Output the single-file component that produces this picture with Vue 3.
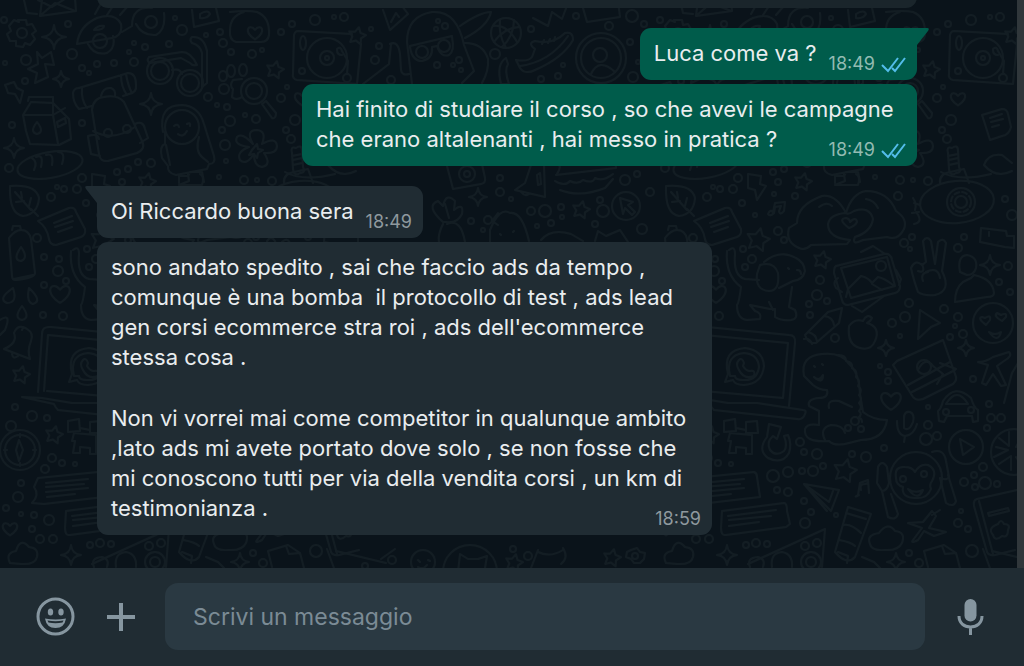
<script setup>
import { ref } from 'vue'

const draft = ref('')

const messages = [
  {
    id: 1,
    out: true,
    tail: true,
    time: '18:49',
    paragraphs: ['Luca come va ?'],
  },
  {
    id: 2,
    out: true,
    time: '18:49',
    paragraphs: ['Hai finito di studiare il corso , so che avevi le campagne che erano altalenanti , hai messo in pratica ?'],
  },
  {
    id: 3,
    out: false,
    tail: true,
    time: '18:49',
    paragraphs: ['Oi Riccardo buona sera'],
  },
  {
    id: 4,
    out: false,
    time: '18:59',
    paragraphs: [
      "sono andato spedito , sai che faccio ads da tempo , comunque è una bomba  il protocollo di test , ads lead gen corsi ecommerce stra roi , ads dell'ecommerce stessa cosa .",
      'Non vi vorrei mai come competitor in qualunque ambito ,lato ads mi avete portato dove solo , se non fosse che mi conoscono tutti per via della vendita corsi , un km di testimonianza .',
    ],
  },
]

const stars = [
  [275, 70, 9], [147, 182, 9], [357, 36, 9], [102, 240, 12], [166, 260, 9], [21, 375, 9],
  [54, 435, 9], [189, 471, 12], [581, 210, 9], [514, 563, 9], [612, 558, 9],
]
const sparkles = [
  [54, 37, 12], [61, 79, 8], [14, 148, 10], [151, 104, 11], [478, 197, 9], [230, 348, 8],
  [310, 348, 8], [71, 555, 10], [334, 265, 10], [240, 562, 9],
]
const hearts = [[60, 294, 11], [235, 401, 11], [10, 529, 8], [302, 99, 8], [255, 33, 8]]
const dots = [
  [4, 20, 3], [68, 24, 3], [26, 60, 5], [5, 63, 2], [72, 54, 5], [25, 81, 3], [82, 68, 3], [89, 73, 2],
  [97, 64, 3], [114, 63, 3], [134, 62, 4], [129, 52, 2], [134, 43, 2], [145, 47, 3], [169, 44, 3],
  [175, 18, 2], [182, 30, 5], [206, 35, 2], [220, 32, 3], [223, 43, 4], [231, 52, 3], [252, 54, 4],
  [262, 50, 2], [281, 32, 3], [292, 24, 3], [287, 87, 2], [281, 98, 4], [208, 97, 4], [217, 105, 2],
  [227, 107, 3], [230, 121, 5], [245, 115, 2], [256, 119, 4], [222, 130, 3], [225, 145, 5], [226, 161, 2],
  [286, 130, 3], [295, 120, 5], [291, 139, 4], [244, 180, 4], [257, 180, 2], [272, 181, 4], [12, 125, 3],
  [9, 168, 4], [82, 178, 4], [82, 123, 3], [117, 172, 3], [128, 169, 3], [138, 162, 3], [151, 163, 4],
  [122, 182, 3], [315, 20, 5], [334, 17, 2], [344, 17, 4], [371, 29, 2], [379, 46, 3], [375, 60, 4],
  [391, 80, 4], [437, 65, 3], [438, 21, 2], [445, 26, 3], [436, 29, 2], [459, 60, 3], [453, 65, 2],
  [461, 70, 2], [495, 54, 5], [531, 29, 3], [576, 16, 3], [609, 26, 4], [632, 16, 6], [630, 42, 3],
  [563, 65, 2], [558, 76, 3], [541, 79, 3], [633, 77, 5], [644, 24, 3], [638, 62, 2],
  [51, 197, 4], [64, 189, 3], [57, 187, 2], [77, 189, 4], [86, 203, 3],
  [118, 194, 2], [139, 196, 3], [99, 215, 2], [122, 231, 4], [128, 240, 3], [87, 249, 3],
  [242, 196, 4], [219, 177, 2], [349, 199, 3], [356, 215, 5],
  [308, 237, 3], [302, 248, 4], [256, 237, 3], [248, 243, 4], [254, 249, 2], [352, 266, 4], [343, 282, 3],
  [354, 292, 3], [288, 309, 4], [302, 317, 4], [253, 303, 4], [249, 317, 5], [236, 323, 4], [244, 336, 2],
  [307, 334, 4], [294, 337, 3], [299, 326, 2], [153, 304, 3], [154, 315, 3], [171, 301, 3], [161, 295, 5],
  [164, 280, 4], [179, 338, 4], [96, 259, 4], [89, 267, 3], [59, 259, 3], [58, 271, 5], [66, 281, 3],
  [44, 257, 3], [44, 285, 3], [43, 315, 3], [63, 316, 4], [37, 238, 4], [224, 366, 2],
  [232, 372, 3], [232, 381, 3], [317, 379, 3], [272, 407, 2], [333, 404, 3], [335, 418, 4], [345, 418, 4],
  [331, 428, 3], [272, 425, 4], [281, 436, 4], [270, 439, 6], [199, 421, 4], [192, 428, 3], [205, 429, 3],
  [144, 442, 4], [148, 452, 3], [161, 454, 5], [196, 454, 3], [210, 457, 5], [228, 448, 3], [167, 466, 3],
  [157, 471, 5], [146, 471, 3], [132, 472, 5], [117, 476, 6], [121, 490, 3], [132, 492, 4], [148, 501, 3],
  [155, 512, 3], [149, 523, 5], [180, 515, 2], [308, 482, 4], [318, 475, 3], [327, 467, 4], [319, 487, 3],
  [329, 483, 6], [341, 484, 3], [305, 511, 2], [302, 523, 4], [312, 529, 3], [316, 551, 6], [253, 553, 3],
  [263, 563, 4], [53, 539, 4], [40, 539, 4], [90, 545, 3], [100, 543, 4], [111, 544, 3], [149, 546, 4],
  [161, 543, 4], [15, 407, 3], [32, 416, 5], [47, 418, 3], [52, 458, 4], [62, 463, 3], [45, 469, 4],
  [75, 464, 2], [21, 483, 3], [18, 497, 5], [6, 508, 3], [21, 514, 2], [34, 515, 3], [49, 520, 5],
  [32, 529, 3], [500, 178, 3], [500, 192, 4], [511, 199, 2], [531, 211, 4], [545, 211, 6], [561, 207, 3],
  [551, 223, 3], [562, 217, 2], [488, 220, 4], [471, 221, 3], [483, 230, 2], [537, 226, 2], [600, 200, 3],
  [603, 211, 6], [595, 224, 3], [625, 180, 5], [637, 174, 3], [650, 192, 4],
  [642, 229, 5], [392, 560, 4], [365, 566, 3], [513, 549, 3], [528, 556, 4],
]

function starPath([x, y, s]) {
  const pts = []
  for (let i = 0; i < 10; i++) {
    const a = -1.35 + (i * Math.PI) / 5
    const r = i % 2 ? s * 0.52 : s
    pts.push(`${(x + r * Math.cos(a)).toFixed(1)} ${(y + r * Math.sin(a)).toFixed(1)}`)
  }
  return `M${pts.join('L')}Z`
}
function sparklePath([x, y, s]) {
  return `M${x} ${y - s}Q${x + 1} ${y - 1} ${x + s} ${y}Q${x + 1} ${y + 1} ${x} ${y + s}Q${x - 1} ${y + 1} ${x - s} ${y}Q${x - 1} ${y - 1} ${x} ${y - s}Z`
}
function heartPath([x, y, s]) {
  return `M${x} ${y + s * 0.8}C${x - s * 1.6} ${y - s * 0.2} ${x - s * 0.7} ${y - s * 1.3} ${x} ${y - s * 0.4}C${x + s * 0.7} ${y - s * 1.3} ${x + s * 1.6} ${y - s * 0.2} ${x} ${y + s * 0.8}Z`
}
</script>

<template>
  <main class="app">
    <section class="chat" aria-label="Conversazione">
      <svg class="wallpaper" aria-hidden="true">
        <defs>
          <pattern id="doodles" width="656" height="600" patternUnits="userSpaceOnUse">
            <g class="ink">
              <circle v-for="(d, i) in dots" :key="'d' + i" :cx="d[0]" :cy="d[1]" :r="d[2]" />
              <path v-for="(s, i) in stars" :key="'s' + i" :d="starPath(s)" />
              <path v-for="(s, i) in sparkles" :key="'p' + i" :d="sparklePath(s)" />
              <path v-for="(s, i) in hearts" :key="'h' + i" :d="heartPath(s)" />
              <!-- envelope, gear, plant, bolt -->
              <path d="M24 0l3 13 10 1M42 0l-2 16 36-5-1-13M41 15l14-12 20 8M38 0l14 7 16-10" />
              <circle cx="22" cy="33" r="5" />
              <path d="M18 20l8 0 1 5 5-1 4 7-4 3 3 5-5 6-5-2-2 4-7-1 0-5-6 0-3-7 4-3-2-5 5-6 5 2z" />
              <path d="M37 52l5 6 9-6 3 13-9-1 3 13-13 6 2-10-9-4 10-5z" />
              <path d="M5 85l9-3 3 6 6 3-3 12-5-9-7-1-2-6z" />
              <!-- milk carton and bread -->
              <path d="M23 115l8-13 22 1 16 16 2 20-12 6-29-1-4-13zM23 115l30 0 5 29M53 103l0 12 12-7M28 101l1-4 24 0 0 5M57 122l8-4 1 5-8 4z" />
              <path d="M37 122q-8 10 0 12 8-2 0-12z" />
              <ellipse cx="50" cy="165" rx="33" ry="13" transform="rotate(-10 50 165)" />
              <path d="M32 158q6 4 2 12M36 157q8-4 5 10M46 155q8-3 6 10M58 152q8 0 4 12" />
              <!-- beetle car -->
              <path d="M77 44q2-18 20-26 18-6 24 6 2 12-9 14zM88 44q6 12 19 9 9-5 6-17M94 30q4-5 10-4 0 4-10 4zM95 14l8-14M107 15l10-15M122 32l10-6M132 26q0-20 20-18M136 24q6 12 20 11 10-5 8-22M120 15l13-15" />
              <circle cx="100" cy="41" r="7" /><circle cx="151" cy="22" r="6" />
              <!-- bedroll and backpack -->
              <path d="M79 88l49-15q8 0 8 12 1 8-7 9l-6 2M92 106l-13 3q-6-6-6-16 1-5 6-5M82 88q-1 12 5 20M121 75q0 12 6 20M126 74q2 12 6 19M101 96q2-9 10-8 5 2 4 8" />
              <path d="M92 110q1-12 12-13 13-3 20 5l18 39q4 8-5 12l-29 8q-8 1-9-7zM93 131q20 11 42-4M88 136q10-3 11 3M88 137l3 17 9 2M135 124q8-4 10 5l3 9-8 5" />
              <circle cx="108" cy="133" r="4" /><circle cx="127" cy="129" r="4" />
              <!-- scooter -->
              <circle cx="160" cy="71" r="13" /><circle cx="160" cy="71" r="9" />
              <circle cx="190" cy="83" r="13" /><circle cx="190" cy="83" r="9" />
              <path d="M149 57l33-5q9 0 15 13-5 1-7-2l-9-5-31 5q-4-2-1-6M172 70q8-2 10 4M192 37q12-1 15 14l0 32-5 4 0-34q-2-8-10-10-3-3 0-6" />
              <!-- astronaut -->
              <circle cx="182" cy="127" r="17" />
              <path d="M163 132q-5-27 19-27 17 1 22 19l10 32q2 8-5 8l-2 5-31 6q-9-2-8-9l-6-8q-3-12 3-14l0-12M199 137q-4 14 3 20l6 5M166 145l4 20M174 126q4-3 5 1M187 124q4-2 3 2M178 134q5 4 9-3M179 183l0-7 9 0 2-4 12 0 2 10" />
              <path d="M230 12q18-2 27 0 13 5 12 23-1 7-8 7l-25 0q-7-2-6-12 0-14 14-18" />
              <path d="M192 10l2 17 25-6-3-13M200 14q8-5 10 0-3 5-10 4z" />
              <!-- paw and magnifier -->
              <ellipse cx="231" cy="71" rx="4" ry="6" /><ellipse cx="243" cy="70" rx="4" ry="6" /><ellipse cx="223" cy="76" rx="4" ry="5" /><ellipse cx="224" cy="89" rx="5" ry="5" />
              <path d="M242 79l-9 1q-4 6 0 9l-1 8q4 4 10 0" />
              <circle cx="254" cy="91" r="13" /><circle cx="254" cy="91" r="8" />
              <path d="M262 104l10 14q4 1 4-5l-10-12z" />
              <!-- flower -->
              <path d="M253 144q-8-14 4-14 10 1 5 14 14-8 15 2 0 8-13 7 8 12-2 14-8-1-8-13-8 12-14 6-4-8 9-13-16-2-12-10 5-5 16 7z" />
              <path d="M257 144l1 5 5 1-5 3-1 5-3-4-5 1 3-5z" />
              <!-- turntable -->
              <path d="M298 31l54 3M361 44l-4 40-60-4q-5-1-4-7l1-38q1-4 4-4" />
              <circle cx="327" cy="58" r="20" /><circle cx="327" cy="58" r="7" /><circle cx="327" cy="58" r="2" />
              <circle cx="302" cy="71" r="3" /><circle cx="347" cy="78" r="4" />
              <ellipse cx="303" cy="43" rx="3" ry="7" />
              <path d="M337 49q4-3 5 2l6 10-1 13M337 50q0 5 5 5" />
              <path d="M383 10l7 20 18-16-6-8M391 22l5-9 3 4" />
              <!-- diver -->
              <path d="M412 84l-5-42q0-26 25-30 25-2 32 33l10 26-12 12M410 46l42-10M410 47q2 14 12 14 11-2 10-14l5-1q4 12 12 9 6-4 3-18M460 26q20-14 31-14-3 14-26 26M465 43q18 0 23 16 1 12-6 24M390 44q8-4 10 10l1 16q1 6 8 4M391 44l-2 20-26 20" />
              <circle cx="422" cy="52" r="6" /><circle cx="444" cy="46" r="6" />
              <circle cx="506" cy="33" r="15" />
              <path d="M493 26q14-2 24 16M494 42q10-14 25-15M500 20q-2 14 6 28M514 20q0 16-12 27M506 58q-10 6-5 26l8 0q-5-14-1-20z" />
              <path d="M516 60q12 2 16-3l3-8q-8-6 0-8 18 4 30-8 8-2 8 7-10 18-38 30-10 5-15-2zM520 66q30-4 48-30M542 44l2-4M548 43l2-4M554 41l1-4M533 18l15 8 4-14 10 7 6-16M583 8l4 14 33-5-2-16" />
              <circle cx="601" cy="58" r="25" /><circle cx="601" cy="58" r="20" /><circle cx="600" cy="55" r="7" />
              <path d="M591 74q8-17 24-2" />
              <!-- sticker, bone, fish -->
              <path d="M326 115l20-6q5 0 6 5l3 13q-2 8-9 9l-12 4-6-19zM334 118l12-4M335 122l12-3M336 127l7-2" />
              <path d="M292 153q-2-7 4-5 6-4 6 3l1 16q3 6-3 6-6 4-7-4zM292 156l10-2M293 160l9-2M293 165l9-2" />
              <path d="M285 172q18 10 50 2M328 165q4-12 18-10l10 8M328 165q12 14 28 6" />
              <!-- leaf, message, bottle -->
              <path d="M10 186q26-2 29 12-1 16-16 18-14-2-13-30zM15 192l16 18M22 198l-1-6M24 201l-8 1M29 206l2-8M31 209l7 7" />
              <path d="M38 221l31-13q6-1 7 4l9 17q1 6-4 8l-25 8q-6 0-7-6-2-12-11-18zM54 223l18-7M55 227l18-6M58 232l14-5" />
              <path d="M9 238q6-8 12-8 8 0 10 9l4 34q0 5-19 7-4 0-4-4zM12 230l1-4 7 0 1 4M14 279l19-4M21 247q-9 13 0 14 8-3 0-14z" />
              <path d="M13 288q-16 11-6 15 11 0 6-15zM29 288q-3 14 4 16 10-3-4-16zM22 306q-9 12 0 14 9-2 0-14z" />
              <!-- bell -->
              <path d="M4 349q14-6 10-16 4-10 13-4 7 4 4 12-4 10-1 18zM12 354q1 6 6 2M22 330q1-4 5-1" />
              <path d="M0 320q12-8 5 10l-5 5" />
              <!-- laptop -->
              <path d="M38 392l4-58q0-8 9-7l82 8q7 0 6 8l-6 63M44 391l4-56 84 8-5 55-80-7M22 397l20 1 30 5 29 0 46 7q4 0 2 4-2 6-8 5l-83-9q-3-3-4-6z" />
              <path d="M69 382l3-8q-6-24 17-26 18 2 19 18-2 18-20 19-9 0-11-5z" />
              <path d="M74 376q-5-21 14-23 14 1 15 14-2 14-16 13-8 0-8-4zM83 360q3-3 5 3l-1 3q3 5 7 5 6-1 4 5-10 4-15-6-4-6 0-10z" />
              <path d="M68 421l11-2 1 12-12 1zM90 422l11-1 1 12-12 0zM80 428l10 2M74 433l-2 8 3 0-2 12 7 0 0-6 10 1 0 6 6 0 0-19z" />
              <!-- compass -->
              <circle cx="20" cy="450" r="20" /><circle cx="20" cy="450" r="15" /><circle cx="11" cy="426" r="5" />
              <path d="M19 440l4 10-4 11-3-11zM20 437l0-3M20 466l0-3M7 450l-3 0M36 450l-3 0" />
              <!-- books -->
              <path d="M38 478l60-6q3 1 3 5l3 20-60 7-12-1q8-8 2-16zM46 483l42-4M46 487l38-3M46 492l42-4M47 497l28-3" />
              <path d="M66 511l62-8q3 0 3 8l3 13-4 3-60 8q-5 1-5-7zM72 516l48-6M73 520l42-4M73 526l30-4" />
              <path d="M10 563q-5-10 6-12 4-14 13-4 10 1 8 10-2 8-16 7z" />
              <!-- lightning, note -->
              <path d="M92 174l13 2-1 8 6 2-9 14-2-10-7-2zM112 214q2-5 5-2l2-9 10-1-1 9q-4 5-5 0l2-5-6 1-1 6q-4 4-6 1z" />
              <!-- heart hands -->
              <path d="M143 248q-14-6-10-20l8-5q0-18 25-27 14-2 24 17-16 1-18 11 0 14 22 16l-3 4-36 1q-6 6-12 3M190 213q6-20 20-22 22 0 30 20 12 8 8 18-6 12-17 8l-24 3q-12 6-8-3 16-5 18-18-3-13-19-8q-6 4-8 2M163 207q8-6 13-1M210 199q8 1 12 9" />
              <path d="M193 228q-12-9-3-10 4 1 4 4 6-6 7 0-2 4-8 6z" />
              <!-- planet -->
              <ellipse cx="301" cy="202" rx="37" ry="21" transform="rotate(-5 301 202)" />
              <circle cx="305" cy="202" r="14" /><circle cx="305" cy="202" r="10" stroke-dasharray="5 3" /><circle cx="305" cy="202" r="6" />
              <path d="M264 205l-6-2M263 212l-7 1M284 183q-1-9 10-11l14-3 5 14M257 198q4 6 2 12M260 212q8 10-2 12M179 185l10-4-1-7M180 185l22 0q3-8-2-11" />
              <path d="M325 228l25 3 1 5 7 0 0 12-9-1-25-5zM333 232l0 4" />
              <!-- dog -->
              <path d="M73 250q6-5 6 4-2 22 10 25l14 1M71 251q-2 24 14 36-2 16-4 18 0 14 10 15l13-1q2-6-5-8l-5-6 20 4 5 0 0 8q6 4 16 3 8-1 4-10l-6-3 3-20M108 262q16-13 32-4 8 4 9 13-2 9-12 10l-14 7M104 265q14-4 18 8 2 18-9 18-14-1-12-17zM132 268l1 1M141 270q4 0 4 4M113 302l4 8" />
              <!-- photo -->
              <path d="M180 266l48-12q7-1 8 6l8 26q0 6-5 7l-47 12q-5 0-6-5l-8-27q0-6 2-7zM185 268l46-11 8 29-44 12zM190 297l2-8 13-13q8 2 11 7l6-6q6 1 15 8M216 284l10 6M205 252l12-6 12 8M196 306l10 6 22-16M182 278q-6 4-2 10l6 4M240 270l5 9-2 6" />
              <circle cx="225" cy="266" r="5" />
              <!-- hand, person -->
              <path d="M262 292q-5-14-7-24 4-9 11-3l4-3-3-21q4-6 8 0l4 23 3-22q5-5 8 1l-4 28q10 20-7 24-12 1-17-3zM266 264q4 10-4 7M270 272q12-6 14 6M267 281q-3-8 5-9" />
              <path d="M304 272q-3-16 7-17 11 2 9 13-2 7-9 7zM299 302q0-14 8-20l8-4 3-3q19 4 20 18 0 4-7 4z" />
              <circle cx="337" cy="323" r="20" />
              <path d="M330 325q-9-7-4-8l3 1q6-4 5 2zM346 321q-9-5-5-8l4 2q6-3 5 2zM333 332q6 4 12 0-3 12-12 0z" />
              <path d="M264 310l20 13-9 4-13 12zM149 335l23-23 14-4-3 15-23 20q-8 1-11-8zM152 332q8 2 9 9M168 316q9 1 10 9M148 339q6-1 8 5" />
              <path d="M193 326q6-8 14-5 4-8 9-3-2 4-5 5 14 4 8 18-4 10-15 7-13-3-11-22z" />
              <!-- dinosaur -->
              <path d="M148 376q-4-20 18-22 20-2 27 10 10 8 11 30l3 18q10 8 24 8-3 20-26 20l-12 3q-14 4-20-2-26 2-24-12 2-6 14-4l0-14-10-5q-2-7 10-8 10 0 8-8-8 0-14-5zM173 408q-2-9 10-7l13 6M169 440q-6-12 6-15 12 0 14 8M206 422q0-4-4-4 5-4 1-7 4-4 0-8 4-4 0-8 4-5-1-9 3-5-2-9 2-6-4-9 1-6-6-7 0-6-8-6M158 366l1 1M166 364l1 1M158 377q5 5 9-2 0 10-9 2z" />
              <!-- gift box, airplane -->
              <path d="M237 365l20 32q3 4 10 2l30-15q5-4 2-10l-12-34-46 21zM252 385l42-23M256 392l43-22M262 370q7-14 15-4l10 8-6 10M284 363l16 6" />
              <circle cx="268" cy="367" r="7" />
              <path d="M322 362q8 0 15-5l16-5q4 4-5 9l-7 5 9 19-5 1-8-12-7 11-4-2 6-18z" />
              <path d="M348 403l8-30 6-10" />
              <!-- microphone, small car -->
              <path d="M248 418q0-7 6-6 5 2 3 10-4 10-9 6zM241 421q0 14 8 15 9-1 12-12M249 436l-1 6M283 421l-1-10q3-2 5-10 12-18 28-3 3 10 7 12l0 11-5 1-1-6-25 0-3 6zM290 404q11-18 22 0z" />
              <circle cx="290" cy="412" r="3" /><circle cx="315" cy="410" r="3" />
              <circle cx="310" cy="447" r="17" />
              <path d="M304 439l14 8-11 8zM111 437q-10 13 1 21 14 7 21-5 3-9-1-18l-4 1q4 10 0 15-8 6-14-1-4-8 3-14l4 3 4-12-12-3z" />
              <!-- orange slice -->
              <circle cx="358" cy="452" r="23" /><path d="M340 447l12 3-14 7M343 438l10 8 0-14M343 464l12-8 0 14M360 447l8-14M360 457l8 12" />
              <!-- monkey -->
              <circle cx="260" cy="478" r="26" />
              <path d="M240 478q-2-12 9-11 7 0 10 5 5-9 13-7 10 5 4 16-3 4-1 8-4 10-15 9-15 0-13-11-7-2-7-9zM252 489q7 5 15 1-5 12-15-1z" />
              <circle cx="247" cy="479" r="3" /><circle cx="268" cy="474" r="3" />
              <path d="M222 467q4-8 9 0l2 16q-2 8-7 8l-5-8zM226 491l6 26q8 4 10-3l-7-20M276 452q12-4 14 9l3 16q-3 4-8 1M284 478l6 25q8 5 10-2l-8-26" />
              <path d="M205 490q-2-6 4-6l3-1M203 495q-6 3-1 0l2-12 8-3 1 13M148 484l35 6-8 21zM148 484l25 18 4-11M148 484l17 20 6 7" />
              <path d="M192 507l23 7-16 43q-8 9-20-5zM190 513l20 6M187 525q8-2 18 8M183 540q12 2 16 6M182 552l10 4-1 7" />
              <path d="M214 544q-4-9 9-11 9-12 16-2 11 1 7 12-4 8-17 7-14 1-15-6zM252 523l15-1 9-11 4 5-7 12 17 4-12 4-10-5-6 9q-8 4-5 0l9-12zM276 515l8-5" />
              <!-- notebook -->
              <path d="M361 490l-40 9q-4 1-3 7l13 46q2 4 8 3l20-5M323 501l14 53M332 513l20-5 1 3-20 5z" />
              <path d="M342 524q3-6 6 0 7 0 4 6 0 8-6 6-7 6-9-1-6-7 5-11z" />
              <path d="M92 564l77-35-3 38M94 567q-4-9 8-10 8 2 5 10M116 567q-2-14 10-15 11 2 10 15" />
              <circle cx="155" cy="562" r="10" /><circle cx="155" cy="562" r="5" />
              <path d="M206 557l12 5 6 6M272 567l-4-16 20-6 12 8 4 15M286 546l3 8 11-1M327 549l8 22M336 551l50 12M395 549l-14 10" />
              <circle cx="423" cy="562" r="12" /><path d="M418 560l2 2M428 560l2 1M418 567q5 3 9-2" />
              <circle cx="470" cy="572" r="27" />
              <path d="M458 572l2-18 8 5 10 0 9-3-3 18M538 550l-7 18M538 552q12 6 25-2M563 548q6 10-2 16" />
              <path d="M631 550l6-2 3 4 5 1-1 6-4 4-6 0-3-4-5-2 1-5z" /><circle cx="635" cy="556" r="3" />
              <!-- camera, bell, burger, cat, cursor -->
              <path d="M447 166l6 23 28-5q5-1 4-6l-3-14M515 190l10-7 6-18q6-8 13 0l1 32zM521 192q4 5 8 2M537 175l1 10 3-1-1-11zM557 174q5-8 1-10M556 175l60-7q0-6-6-9M555 181q10 6 15 0 8 4 13-1 10 4 12-2 8 4 18-4M560 190q20 8 45-2l8-9" />
              <circle cx="467" cy="174" r="8" /><circle cx="467" cy="174" r="3" />
              <path d="M443 222q-18-16-5-21l5 5q3-14 12-5l-1 9q10-8 8 4-5 10-16 8zM449 218l-4-14M443 224q-8 16-1 24M447 224q14-6 18 18M490 242l0-12q10-24 20-17 12-2 19 28M498 225l-6-4 6-8M501 235l-1-1M513 232l1-1M541 240q10-12 30-6l12 7M595 241l3-10 8 5 14-6 8 12" />
              <circle cx="626" cy="206" r="14" /><path d="M620 198l13 4-5 3 7 7-3 3-7-7-2 6z" />
            </g>
          </pattern>
        </defs>
        <rect width="100%" height="100%" fill="url(#doodles)" />
      </svg>

      <div class="thread">
        <div class="previous"></div>
        <article
          v-for="m in messages"
          :key="m.id"
          class="bubble"
          :class="{ out: m.out, first: m.tail }"
        >
          <svg v-if="m.tail" class="tail" viewBox="0 0 12 17" aria-hidden="true">
            <path d="M0 0H10Q13 0 11 3L0 17Z" />
          </svg>
          <p v-for="(p, i) in m.paragraphs" :key="i">{{ p }}<span v-if="i === m.paragraphs.length - 1" class="meta"><time>{{ m.time }}</time><svg v-if="m.out" class="ticks" viewBox="0 0 25 17" role="img" aria-label="Letto">
              <path d="M1 9L7 15L17 2" />
              <path d="M11 12L14 15L24 2" />
            </svg></span></p>
        </article>
      </div>
      <div class="scrollbar"></div>
    </section>

    <form class="composer" @submit.prevent="draft = ''">
      <button type="button" class="emoji" aria-label="Emoji">
        <svg viewBox="0 0 39 39" aria-hidden="true">
          <circle cx="19.500" cy="19.500" r="17.500" fill="none" stroke="currentColor" stroke-width="3" />
          <ellipse cx="14.500" cy="15" rx="2.700" ry="3.500" fill="currentColor" />
          <ellipse cx="25" cy="15" rx="2.700" ry="3.500" fill="currentColor" />
          <path d="M9 21.500Q19.500 23.500 30 21.500Q28.500 31 19.500 31Q10.500 31 9 21.500Z" fill="currentColor" />
          <path d="M11.500 23.500Q19.500 25 27.500 23.500L26.500 25.500Q19.500 27 12.500 25.500Z" class="mouth" />
        </svg>
      </button>
      <button type="button" class="plus" aria-label="Allega">
        <svg viewBox="0 0 28 28" aria-hidden="true">
          <path d="M14 0V28M0 14H28" fill="none" stroke="currentColor" stroke-width="4" />
        </svg>
      </button>
      <input v-model="draft" type="text" placeholder="Scrivi un messaggio" aria-label="Scrivi un messaggio" />
      <button type="button" class="mic" aria-label="Messaggio vocale">
        <svg viewBox="0 0 27 36" aria-hidden="true">
          <rect x="7.500" y="0" width="12" height="22.500" rx="6" fill="currentColor" />
          <path d="M2 17C2 24 7 28 13.500 28S25 24 25 17M13.500 28V36" fill="none" stroke="currentColor" stroke-width="3" />
        </svg>
      </button>
    </form>
  </main>
</template>

<style>
body {
  margin: 0;
  background: #0b141a;
}
</style>

<style scoped>
.app {
  display: flex;
  flex-direction: column;
  height: 100vh;
  overflow: hidden;
  font-family: Inter, "Liberation Sans", sans-serif;
  color: #e9edef;
}
.chat {
  position: relative;
  flex: 1;
  min-height: 0;
  display: flex;
  overflow: hidden;
  background: #0a131a;
}
.wallpaper {
  position: absolute;
  inset: 0;
  width: 100%;
  height: 100%;
}
.ink {
  fill: none;
  stroke: #131d23;
  stroke-width: 2;
  stroke-linejoin: round;
  stroke-linecap: round;
}
.thread {
  position: relative;
  flex: 1;
  display: flex;
  flex-direction: column;
  justify-content: flex-end;
  align-items: flex-start;
  gap: 4px;
  padding: 0 100px 33px 97px;
}
.scrollbar {
  position: relative;
  width: 7px;
  background: #30373b;
}
.previous {
  align-self: stretch;
  flex: none;
  height: 52px;
  border-radius: 11px;
  background: #1a252b;
}
.bubble {
  position: relative;
  display: flex;
  flex-direction: column;
  gap: 31px;
  box-sizing: border-box;
  max-width: 75%;
  padding: 10px 11px 12px 14px;
  border-radius: 11px;
  background: #202c33;
  font-size: 22px;
  line-height: 30px;
  white-space: pre-wrap;
}
.bubble.out {
  align-self: flex-end;
  background: #005c4b;
}
.bubble.first {
  margin-top: 16px;
  border-top-left-radius: 0;
}
.bubble.out.first {
  border-top-left-radius: 11px;
  border-top-right-radius: 0;
}
.tail {
  position: absolute;
  top: 0;
  right: 100%;
  width: 12px;
  height: 17px;
  fill: #202c33;
  transform: scaleX(-1);
}
.out .tail {
  right: auto;
  left: 100%;
  fill: #005c4b;
  transform: none;
}
.bubble p {
  height: max-content;
  margin: 0;
}
.bubble p:last-child {
  margin-bottom: -5px;
  padding-bottom: 5px;
}
.bubble p:last-child::after {
  content: "";
  display: block;
}
.meta {
  float: right;
  display: flex;
  align-items: center;
  gap: 6px;
  height: 18px;
  margin: 17px 0 -5px 12px;
  font-size: 18px;
  line-height: 18px;
  color: #8f999e;
}
.out .meta {
  color: #93bbb2;
}
.ticks {
  width: 25px;
  height: 17px;
  fill: none;
  stroke: #53bdeb;
  stroke-width: 2;
}
.composer {
  flex: none;
  display: flex;
  align-items: center;
  padding: 15px 40px 16px 36px;
  background: #202c33;
}
.composer button {
  flex: none;
  display: block;
  padding: 0;
  border: 0;
  background: none;
  color: #8696a0;
  cursor: pointer;
}
.composer svg {
  display: block;
  width: 100%;
}
.composer .emoji {
  width: 39px;
  margin-right: 32px;
}
.mouth {
  fill: #202c33;
}
.composer .plus {
  width: 28px;
  margin-right: 30px;
}
.composer input {
  flex: 1;
  min-width: 0;
  box-sizing: border-box;
  height: 67px;
  padding: 0 28px;
  border: 0;
  border-radius: 13px;
  outline: 0;
  background: #2a3942;
  color: #e9edef;
  font: inherit;
  font-size: 23px;
}
.composer input::placeholder {
  color: #7b8b95;
  opacity: 1;
}
.composer .mic {
  width: 27px;
  margin-left: 32px;
}
</style>
